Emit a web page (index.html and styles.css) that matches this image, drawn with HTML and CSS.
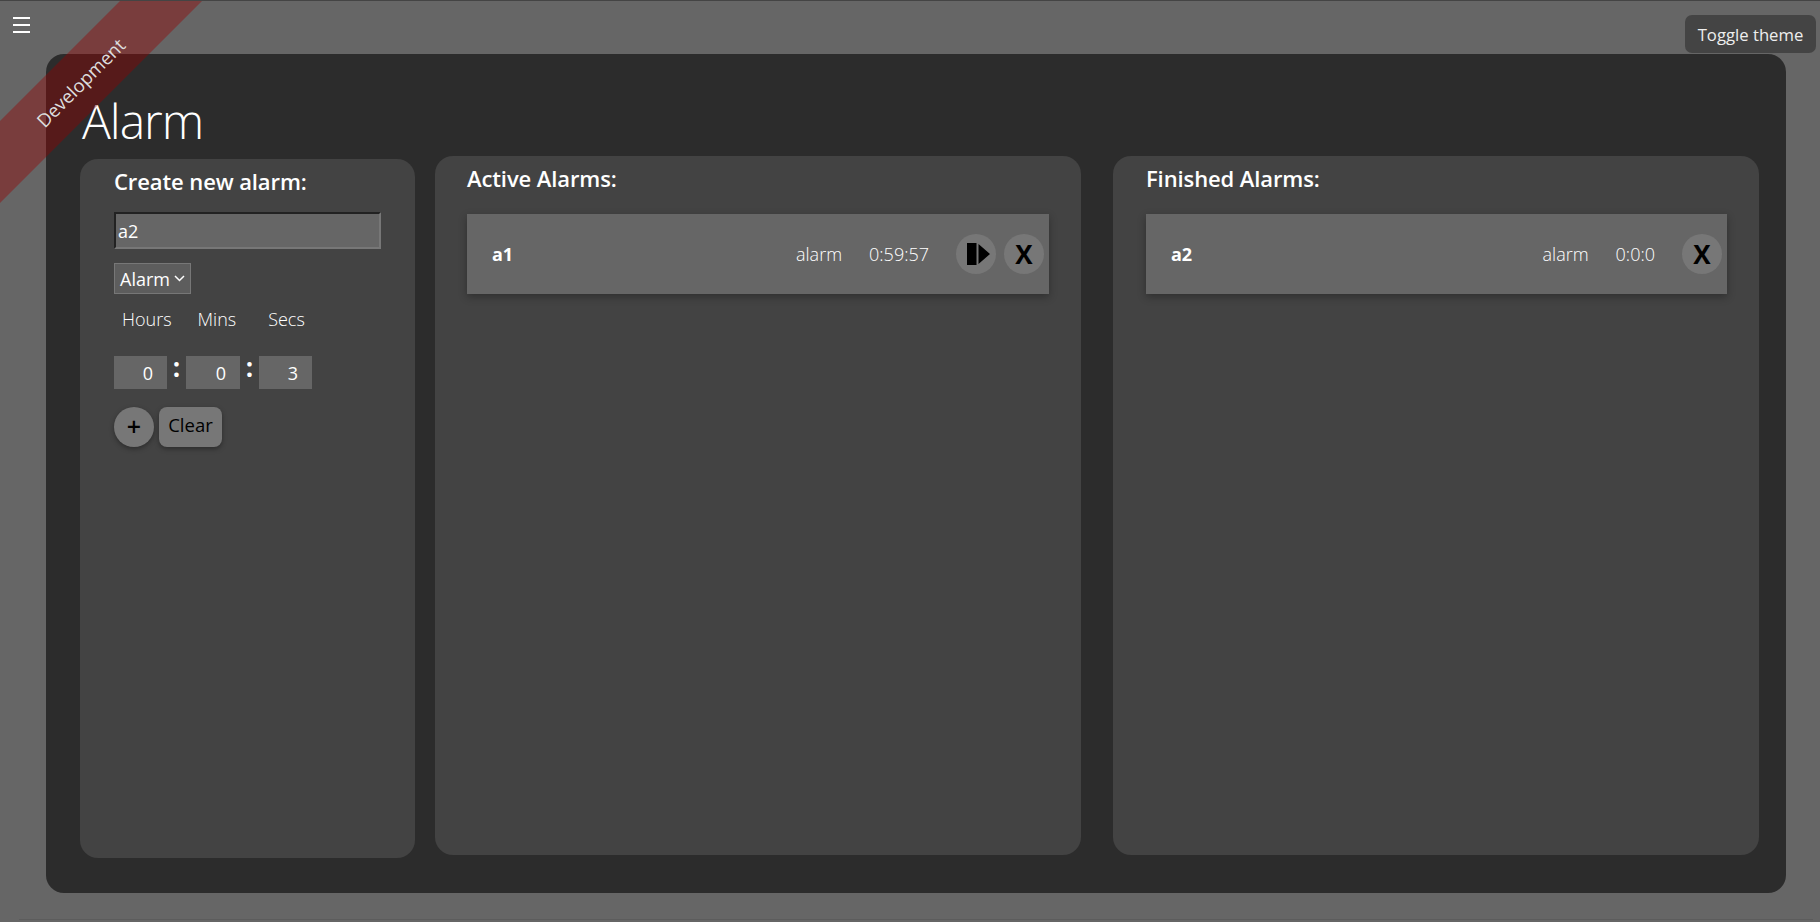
FILE: index.html
```html
<!DOCTYPE html>
<html lang="en">
<head>
  <meta charset="UTF-8">
  <meta name="viewport" content="width=device-width, initial-scale=1.0">
  <title>Alarm</title>
  <link rel="stylesheet" href="styles.css">
</head>
<body>
  <div class="ribbon"><span>Development</span></div>
  <header class="topbar">
    <button class="menu-btn" type="button" aria-label="Menu">
      <svg width="17" height="16" viewBox="0 0 17 16"><path d="M0 1h17M0 8h17M0 15h17" stroke="#fff" stroke-width="2"/></svg>
    </button>
    <button class="theme-btn" type="button">Toggle theme</button>
  </header>
  <main class="page">
    <h1 class="title">Alarm</h1>
    <div class="columns">
      <section class="panel panel-new">
        <h2 class="panel-title">Create new alarm:</h2>
        <input class="name-input" type="text" value="a2">
        <div class="select-box">Alarm
          <svg width="11" height="7" viewBox="0 0 11 7"><path d="M1 1l4.500 4.500L10 1" fill="none" stroke="#fff" stroke-width="1.500"/></svg>
        </div>
        <div class="time-labels">
          <span class="lbl-hours">Hours</span>
          <span class="lbl-mins">Mins</span>
          <span class="lbl-secs">Secs</span>
        </div>
        <div class="time-inputs">
          <input class="num" type="text" value="0">
          <span class="colon">:</span>
          <input class="num num-mid" type="text" value="0">
          <span class="colon">:</span>
          <input class="num" type="text" value="3">
        </div>
        <div class="actions">
          <button class="round-btn add-btn" type="button">+</button>
          <button class="clear-btn" type="button">Clear</button>
        </div>
      </section>
      <section class="panel panel-list">
        <h2 class="panel-title">Active Alarms:</h2>
        <div class="alarm-row">
          <b class="alarm-name">a1</b>
          <span class="alarm-type">alarm</span>
          <span class="alarm-time">0:59:57</span>
          <button class="round-btn" type="button" aria-label="Pause">
            <svg class="pause-icon" width="23" height="22" viewBox="0 0 23 22"><path d="M0 0h9.500v22H0zM11.500 1v20L23 11z" fill="#000"/></svg>
          </button>
          <button class="round-btn x-btn" type="button">X</button>
        </div>
      </section>
      <section class="panel panel-list panel-last">
        <h2 class="panel-title">Finished Alarms:</h2>
        <div class="alarm-row">
          <b class="alarm-name">a2</b>
          <span class="alarm-type">alarm</span>
          <span class="alarm-time">0:0:0</span>
          <button class="round-btn x-btn" type="button">X</button>
        </div>
      </section>
    </div>
  </main>
  <hr class="foot-line">
</body>
</html>
```

FILE: styles.css
```css
*{box-sizing:border-box;}
html,body{height:100%;}
body{margin:0;background:#666;color:#fff;font-family:"Open Sans",Arial,sans-serif;font-size:18px;border-top:1px solid #444;overflow:hidden;position:relative;}
button{font-family:inherit;border:none;padding:0;cursor:pointer;}

/* sits over the corner of the page */
.ribbon{position:absolute;left:-70px;top:52px;width:300px;height:58px;background:rgba(150,0,0,.4);transform:rotate(-45deg);display:flex;justify-content:center;align-items:center;font-size:18.500px;color:#ddd;}

.topbar{height:53px;display:flex;justify-content:space-between;align-items:flex-start;padding:14px 4px 0 13px;}
.menu-btn{background:none;margin-top:2px;line-height:0;}
.theme-btn{width:131px;height:38px;background:#444;color:#eee;border-radius:7px;font-size:16.700px;}

.page{margin:0 34px 0 46px;height:839px;background:#2c2c2c;border-radius:18px;padding:37px 27px 0 34px;}
.title{margin:0 0 0 2px;font-size:48px;font-weight:300;line-height:60px;height:65px;letter-spacing:-1px;}
.columns{display:flex;align-items:flex-start;}

.panel{background:#434343;border-radius:18px;}
.panel-title{margin:0;font-size:22px;font-weight:600;line-height:28px;letter-spacing:-.1px;}
.panel-new{width:335px;height:699px;margin:3px 0 0 0;padding:8px 33px 0 34px;flex:none;}
.panel-list{width:646px;height:699px;margin-left:20px;padding:8px 32px 0 32px;flex:none;}
.panel-last{margin-left:32px;padding-left:33px;}

.name-input{display:block;width:267px;height:37px;margin-top:17px;padding:0 2px;background:#666;color:#fff;font:inherit;font-size:18px;border:2px solid;border-color:#222 #777 #777 #222;}
.select-box{display:inline-flex;align-items:center;gap:4px;height:31px;margin-top:14px;padding:0 5px;background:#5d5d5d;border:1px solid #777;font-size:18px;color:#fff;}
.time-labels{display:flex;margin-top:5px;height:40px;align-items:center;padding-left:8px;font-weight:300;}
.lbl-mins{margin-left:26px;}
.lbl-secs{margin-left:32px;}
.time-inputs{display:flex;margin-top:17px;align-items:flex-start;}
.num{width:53px;height:33px;background:#666;border:none;color:#fff;text-align:right;padding:0 14px;font:inherit;}
.num-mid{width:54px;}
.colon{width:19px;text-align:center;font-size:26px;font-weight:700;line-height:22px;}
.actions{display:flex;gap:5px;margin-top:18px;}
.round-btn{width:40px;height:40px;border-radius:50%;background:#777;color:#000;display:flex;justify-content:center;align-items:center;flex:none;}
.add-btn{font-size:25px;font-weight:600;padding-bottom:2px;box-shadow:0 2px 5px rgba(0,0,0,.35);}
.clear-btn{width:63px;height:40px;padding-bottom:6px;background:#777;color:#000;border-radius:8px;font-size:18.500px;box-shadow:0 2px 5px rgba(0,0,0,.35);}

.alarm-row{display:flex;align-items:center;gap:8px;height:80px;margin-top:22px;padding:0 5px 0 25px;background:#666;box-shadow:0 3px 8px rgba(0,0,0,.3);}
.alarm-name{flex:1;font-size:18px;}
.alarm-type{font-weight:300;margin-right:19px;}
.alarm-time{font-weight:300;margin-right:19px;}
.pause-icon{margin-left:5px;}
.x-btn{font-size:26px;font-weight:700;}

.foot-line{position:absolute;left:19px;right:7px;top:918px;margin:0;border:none;border-top:1px solid #5c5c5c;}
```
